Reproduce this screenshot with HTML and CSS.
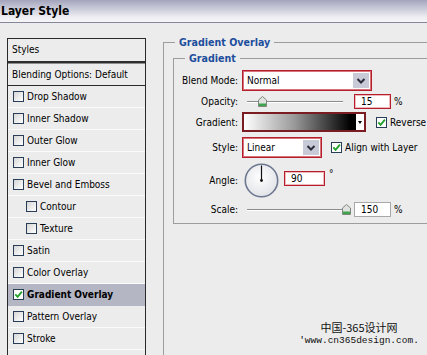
FILE: index.html
```html
<!DOCTYPE html>
<html>
<head>
<meta charset="utf-8">
<title>Layer Style</title>
<link rel="stylesheet" href="styles.css">
</head>
<body>
<div class="titlebar">Layer Style</div>
<div class="main">
  <div class="styles-panel">
    <div class="panel-head">Styles</div>
    <div class="panel-blend">Blending Options: Default</div>
    <ul class="fx-list">
      <li class="fx"><span class="cb"></span>Drop Shadow</li>
      <li class="fx"><span class="cb"></span>Inner Shadow</li>
      <li class="fx"><span class="cb"></span>Outer Glow</li>
      <li class="fx"><span class="cb"></span>Inner Glow</li>
      <li class="fx"><span class="cb"></span>Bevel and Emboss</li>
      <li class="fx sub"><span class="cb"></span>Contour</li>
      <li class="fx sub"><span class="cb"></span>Texture</li>
      <li class="fx"><span class="cb"></span>Satin</li>
      <li class="fx"><span class="cb"></span>Color Overlay</li>
      <li class="fx active"><span class="cb checked"><svg viewBox="0 0 9 9" width="9" height="9"><path d="M1.3 4.4 L3.6 6.9 L7.9 1.6" fill="none" stroke="#22a12a" stroke-width="1.8"/></svg></span>Gradient Overlay</li>
      <li class="fx"><span class="cb"></span>Pattern Overlay</li>
      <li class="fx"><span class="cb"></span>Stroke</li>
    </ul>
  </div>
  <div class="settings">
    <fieldset class="outer">
      <legend>Gradient Overlay</legend>
      <fieldset class="inner">
        <legend>Gradient</legend>
        <div class="row r1">
          <span class="lbl">Blend Mode:</span>
          <div class="select blend"><span class="val">Normal</span><span class="btn"><svg viewBox="0 0 14 14" width="14" height="14"><path d="M3.5 5 L7 8.5 L10.5 5" fill="none" stroke="#2c2c38" stroke-width="2"/></svg></span></div>
        </div>
        <div class="row r2">
          <span class="lbl">Opacity:</span>
          <div class="slider"><div class="track"></div><svg class="thumb op" viewBox="0 0 9 11" width="9" height="11"><path d="M0.5 4 L4.5 0.5 L8.5 4 V10.5 H0.5 Z" fill="#dfe2df" stroke="#7d877d"/><rect x="1" y="7.5" width="7" height="2.5" fill="#3fa54c"/></svg></div>
          <span class="num red">15</span>
          <span class="pct">%</span>
        </div>
        <div class="row r3">
          <span class="lbl">Gradient:</span>
          <div class="grad"><span class="grad-fill"></span><span class="grad-btn"><span class="tri"></span></span></div>
          <span class="cb checked cb-rev"><svg viewBox="0 0 9 9" width="9" height="9"><path d="M1.3 4.4 L3.6 6.9 L7.9 1.6" fill="none" stroke="#22a12a" stroke-width="1.8"/></svg></span>
          <span class="cb-text">Reverse</span>
        </div>
        <div class="row r4">
          <span class="lbl">Style:</span>
          <div class="select style"><span class="val">Linear</span><span class="btn"><svg viewBox="0 0 14 14" width="14" height="14"><path d="M3.5 5 L7 8.5 L10.5 5" fill="none" stroke="#2c2c38" stroke-width="2"/></svg></span></div>
          <span class="cb checked cb-align"><svg viewBox="0 0 9 9" width="9" height="9"><path d="M1.3 4.4 L3.6 6.9 L7.9 1.6" fill="none" stroke="#22a12a" stroke-width="1.8"/></svg></span>
          <span class="cb-text">Align with Layer</span>
        </div>
        <div class="row r5">
          <span class="lbl">Angle:</span>
          <svg class="dial" viewBox="0 0 35 35" width="35" height="35">
            <defs><radialGradient id="dg" cx="45%" cy="40%" r="60%"><stop offset="0" stop-color="#ffffff"/><stop offset="1" stop-color="#e2e3e8"/></radialGradient></defs>
            <circle cx="17.5" cy="17.5" r="16.2" fill="url(#dg)" stroke="#6d7891" stroke-width="1.6"/>
            <line x1="17.5" y1="17.5" x2="17.5" y2="2.5" stroke="#111" stroke-width="1.2"/>
            <circle cx="17.5" cy="17.5" r="1.4" fill="#111"/>
          </svg>
          <span class="num red angle">90</span>
          <span class="deg">°</span>
        </div>
        <div class="row r6">
          <span class="lbl">Scale:</span>
          <div class="slider"><div class="track"></div><svg class="thumb sc" viewBox="0 0 9 11" width="9" height="11"><path d="M0.5 4 L4.5 0.5 L8.5 4 V10.5 H0.5 Z" fill="#dfe2df" stroke="#7d877d"/><rect x="1" y="7.5" width="7" height="2.5" fill="#3fa54c"/></svg></div>
          <span class="num gray">150</span>
          <span class="pct">%</span>
        </div>
      </fieldset>
      <div class="watermark">
        <div class="wm-cn">中国-365设计网</div>
        <div class="wm-url">'www.cn365design.com.</div>
      </div>
    </fieldset>
  </div>
</div>
</body>
</html>
```

FILE: styles.css
```css
* { box-sizing: border-box; }
html, body { margin: 0; padding: 0; }
body {
  width: 427px;
  height: 355px;
  overflow: hidden;
  background: #ececec;
  font-family: "DejaVu Sans Condensed", "DejaVu Sans", sans-serif;
  font-size: 10px;
  color: #000;
}
.titlebar {
  height: 23px;
  border-bottom: 1px solid #85869a;
  background: linear-gradient(to bottom, #a3a4bc 0%, #c6c7d6 35%, #eeeef2 78%, #f6f6f8 100%);
  font-weight: bold;
  font-size: 12px;
  line-height: 23px;
  padding-left: 1px;
}
.main { display: flex; align-items: flex-start; }

/* left list */
.styles-panel {
  flex: none;
  width: 139px;
  height: 317px;
  margin: 15px 0 0 7px;
  border: 1px solid #2a2a2a;
  border-bottom: none;
  overflow: hidden;
}
.panel-head {
  height: 24px;
  line-height: 22px;
  padding-left: 4px;
  border-bottom: 2px solid #2e2e2e;
}
.panel-blend {
  height: 23px;
  line-height: 21px;
  padding-left: 4px;
  border-top: 1px solid #8c8c8c;
  border-bottom: 1px solid #2a2a2a;
}
.fx-list { list-style: none; margin: 0; padding: 0; }
.fx {
  display: flex;
  align-items: center;
  gap: 3px;
  height: 22px;
  padding-left: 5px;
  border-bottom: 1px solid #fafafa;
}
.fx.sub { padding-left: 18px; }
.fx.active { background: #b4b6c4; font-weight: bold; border-bottom-color: #b4b6c4; }

.cb {
  flex: none;
  width: 11px;
  height: 11px;
  border: 1px solid #2a3d56;
  background: linear-gradient(135deg, #d6d6d6, #ffffff);
  display: flex;
  align-items: center;
  justify-content: center;
}
.cb.checked { background: #fff; }

/* right settings */
.settings { flex: 1; min-width: 0; margin: 12px 0 0 17px; }
fieldset {
  margin: 0;
  min-width: 0;
  border: 1px solid #9d9d9d;
  border-right: none;
}
legend {
  color: #1d4e9d;
  font-weight: bold;
  font-size: 10.6px;
  line-height: 14px;
  padding: 0 4px;
}
.outer { padding: 0 0 0 9px; border-bottom: none; height: 320px; overflow: hidden; }
.outer > legend { margin-left: 2px; }
.inner { margin-top: 2px; padding: 5px 0 6px 0; }
.inner > legend { margin-left: 11px; }

.row { display: flex; align-items: center; }
.r1 { height: 21px; }
.r2 { height: 15px; margin-top: 3px; }
.r3 { height: 20px; margin-top: 3px; }
.r4 { height: 21px; margin-top: 5px; }
.r5 { height: 35px; margin-top: 5px; align-items: flex-start; }
.r6 { height: 15px; margin-top: 4px; }
.lbl { flex: none; width: 64px; margin-right: 4px; text-align: right; white-space: nowrap; }
.r5 .lbl { line-height: 15px; margin-top: 10px; }

.select {
  flex: none;
  display: flex;
  height: 21px;
  background: #fff;
  border: 1px solid #b41f2b;
  box-shadow: inset 0 0 0 1px #d8727a;
}
.select .val { flex: 1; padding-left: 4px; line-height: 19px; }
.select .btn {
  flex: none;
  width: 16px;
  margin: 2px 2px 2px 0;
  background: #c9cad7;
  display: flex;
  align-items: center;
  justify-content: center;
}
.select.blend { width: 130px; }
.select.style { width: 80px; }

.slider { position: relative; flex: none; width: 96px; height: 15px; margin-left: 5px; }
.track { margin-top: 7px; height: 2px; border-top: 1px solid #8c8c8c; border-bottom: 1px solid #ffffff; }
.thumb { position: absolute; top: 2px; }
.thumb.op { left: 11px; }
.thumb.sc { left: 95px; }

.num {
  flex: none;
  width: 37px;
  height: 15px;
  margin-left: 11px;
  padding-left: 6px;
  line-height: 13px;
  background: #fff;
}
.num.red { border: 1px solid #b41f2b; box-shadow: inset 0 0 0 1px #f0b8bc; }
.num.gray { border: 1px solid #a8a8a8; }
.pct { margin-left: 3px; }

.grad {
  flex: none;
  display: flex;
  width: 124px;
  height: 20px;
  border: 2px solid #7a1c22;
}
.grad-fill { flex: 1; background: linear-gradient(to right, #ffffff 0%, #9a9a9a 45%, #000000 96%); }
.grad-btn {
  flex: none;
  width: 9px;
  background: #fff;
  border-left: 1px solid #000;
  display: flex;
  align-items: center;
  justify-content: center;
}
.tri { width: 0; height: 0; border-left: 2.5px solid transparent; border-right: 2.5px solid transparent; border-top: 3px solid #000; }
.cb-rev { margin-left: 10px; }
.cb-align { margin-left: 9px; }
.cb-text { margin-left: 3px; white-space: nowrap; }

.dial { flex: none; margin-left: 2px; }
.num.angle { width: 41px; margin-left: 5px; margin-top: 8px; }
.deg { margin-left: 4px; margin-top: 5px; line-height: 12px; }

.watermark {
  width: 130px;
  margin: 96px 3px 0 auto;
  text-align: center;
  color: #111;
}
.wm-cn { font-family: "Noto Sans CJK SC", sans-serif; font-size: 11px; line-height: 15px; }
.wm-url { font-family: "Liberation Mono", monospace; font-size: 9.5px; line-height: 11px; }
```
